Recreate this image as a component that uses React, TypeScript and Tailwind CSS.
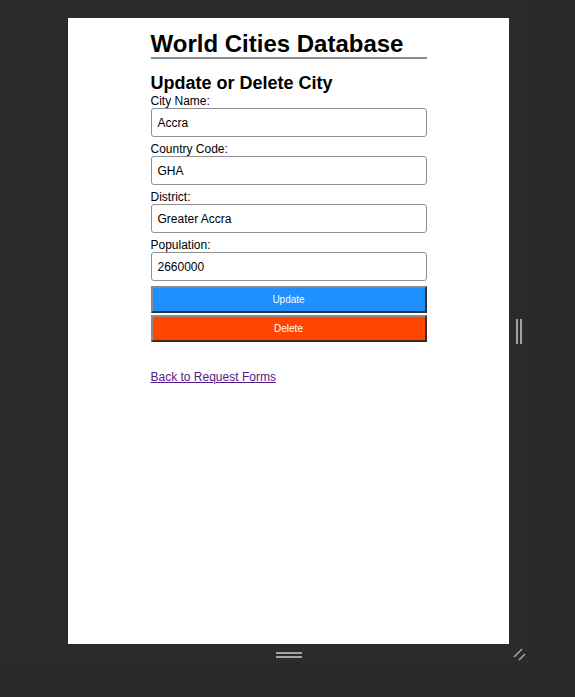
import React from "react";

function Field({ label, value, first }: { label: string; value: string; first?: boolean }) {
  return (
    <div className={first ? "" : "mt-[5px]"}>
      <div className="text-[12px] leading-[14px] text-black">{label}</div>
      <div className="h-[29px] border border-[#8f8f8f] rounded-[3px] flex items-center pl-[6px] text-[12px] text-black">
        {value}
      </div>
    </div>
  );
}

export default function App() {
  return (
    <div className="w-[575px] h-[697px] bg-[#292929] font-['Liberation_Sans',Arial,sans-serif] overflow-hidden">
      <div className="w-[529px] h-[663px] bg-[#2b2b2c] pl-[68px] pt-[18px]">
        <div className="flex">
          <div className="w-[441px] h-[626px] bg-white">
            <div className="w-[276px] mx-auto pt-[12px]">
              <h1 className="text-[24px] leading-[27px] font-bold text-black border-b-2 border-[#8c8c8c]">
                World Cities Database
              </h1>
              <h2 className="mt-[14px] text-[18px] leading-[21px] font-bold text-black">
                Update or Delete City
              </h2>
              <Field first label="City Name:" value="Accra" />
              <Field label="Country Code:" value="GHA" />
              <Field label="District:" value="Greater Accra" />
              <Field label="Population:" value="2660000" />
              <button className="mt-[5px] block w-full h-[27px] bg-[#1e90ff] text-white text-[10px] border-2 border-t-[#8a8a8a] border-l-[#8a8a8a] border-b-[#2a3644] border-r-[#333333]">
                Update
              </button>
              <button className="mt-[2px] block w-full h-[27px] bg-[#ff4500] text-white text-[10px] border-2 border-t-[#8a8a8a] border-l-[#8a8a8a] border-b-[#3a2a22] border-r-[#333333]">
                Delete
              </button>
              <a href="#" className="mt-[28px] inline-block text-[12px] leading-[14px] text-[#551a8b] underline">
                Back to Request Forms
              </a>
            </div>
          </div>
          <div className="flex items-center pl-[7px]">
            <div className="flex gap-[2px]">
              <div className="w-[2px] h-[25px] bg-[#a3a3a3]" />
              <div className="w-[2px] h-[25px] bg-[#a3a3a3]" />
            </div>
          </div>
        </div>
        <div className="flex">
          <div className="w-[441px] flex justify-center pt-[8px]">
            <div className="flex flex-col gap-[2px]">
              <div className="w-[26px] h-[2px] bg-[#a3a3a3]" />
              <div className="w-[26px] h-[2px] bg-[#a3a3a3]" />
            </div>
          </div>
          <div className="pl-[4px] pt-[4px]">
            <svg width="13" height="13" viewBox="0 0 13 13">
              <line x1="1" y1="9" x2="9" y2="1" stroke="#a3a3a3" strokeWidth="1.6" />
              <line x1="6" y1="12" x2="12" y2="6" stroke="#a3a3a3" strokeWidth="1.6" />
            </svg>
          </div>
        </div>
      </div>
    </div>
  );
}
